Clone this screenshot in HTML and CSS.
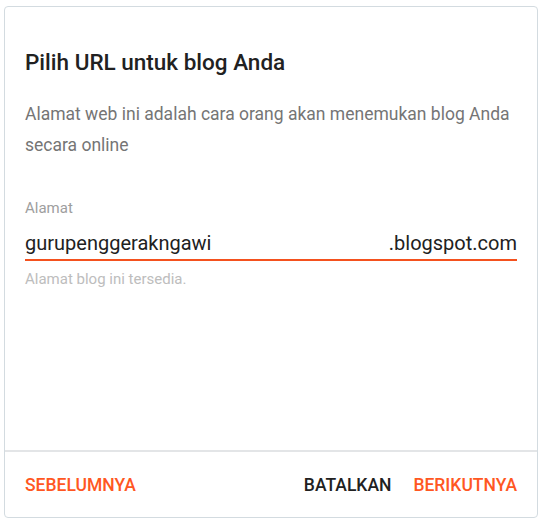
FILE: index.html
```html
<!DOCTYPE html>
<html lang="id">
<head>
    <meta charset="UTF-8">
    <meta name="viewport" content="width=device-width, initial-scale=1.0">
    <title>Pilih URL | Blogger</title>
    <link rel="stylesheet" href="styles.css">
</head>
<body>

    <div class="dialog">
        <div class="dialog-body">
            <h2 class="dialog-title">Pilih URL untuk blog Anda</h2>
            <p class="dialog-desc">Alamat web ini adalah cara orang akan menemukan blog Anda secara online</p>

            <div class="field">
                <label class="field-label" for="blogUrl">Alamat</label>
                <div class="field-input">
                    <input id="blogUrl" type="text" value="gurupenggerakngawi">
                    <span class="field-suffix">.blogspot.com</span>
                </div>
                <div class="field-hint">Alamat blog ini tersedia.</div>
            </div>
        </div>

        <div class="dialog-actions">
            <button class="btn btn-accent">Sebelumnya</button>
            <div class="actions-right">
                <button class="btn">Batalkan</button>
                <button class="btn btn-accent">Berikutnya</button>
            </div>
        </div>
    </div>

</body>
</html>
```

FILE: styles.css
```css
body {
    font-family: Roboto, 'Noto Sans', sans-serif;
    margin: 0;
    padding: 6px 6px 0 4px;
    background-color: #fff;
}

.dialog {
    width: 532px;
    height: 510px;
    border: 1px solid #d3dbe0;
    border-radius: 4px;
    display: flex;
    flex-direction: column;
}

.dialog-body {
    flex-grow: 1;
    padding: 41px 20px 0 20px;
}

.dialog-title {
    margin: 0;
    font-size: 22.5px;
    font-weight: 500;
    line-height: 28px;
    color: #212121;
}

.dialog-desc {
    margin: 23px 0 0 0;
    font-size: 17.5px;
    line-height: 31px;
    color: #757575;
}

.field {
    margin-top: 38px;
}

.field-label {
    display: block;
    font-size: 15px;
    line-height: 18px;
    color: #9e9e9e;
}

.field-input {
    display: flex;
    align-items: baseline;
    border-bottom: 2px solid #f4511e;
    margin-top: 12px;
    padding-bottom: 2px;
}

.field-input input {
    flex-grow: 1;
    min-width: 0;
    border: none;
    outline: none;
    padding: 0;
    font-family: inherit;
    font-size: 20px;
    line-height: 28px;
    color: #212121;
    background: transparent;
}

.field-suffix {
    font-size: 20px;
    line-height: 28px;
    color: #212121;
}

.field-hint {
    margin-top: 9px;
    font-size: 15px;
    line-height: 18px;
    color: #bdbdbd;
}

.dialog-actions {
    display: flex;
    justify-content: space-between;
    align-items: center;
    height: 65px;
    padding: 0 20px;
    border-top: 2px solid #e3e5e7;
}

.actions-right {
    display: flex;
    gap: 22px;
}

.btn {
    background: none;
    border: none;
    padding: 0;
    font-family: inherit;
    font-size: 17.5px;
    font-weight: 500;
    text-transform: uppercase;
    color: #212121;
    cursor: pointer;
}

.btn-accent {
    color: #ff5722;
}
```
